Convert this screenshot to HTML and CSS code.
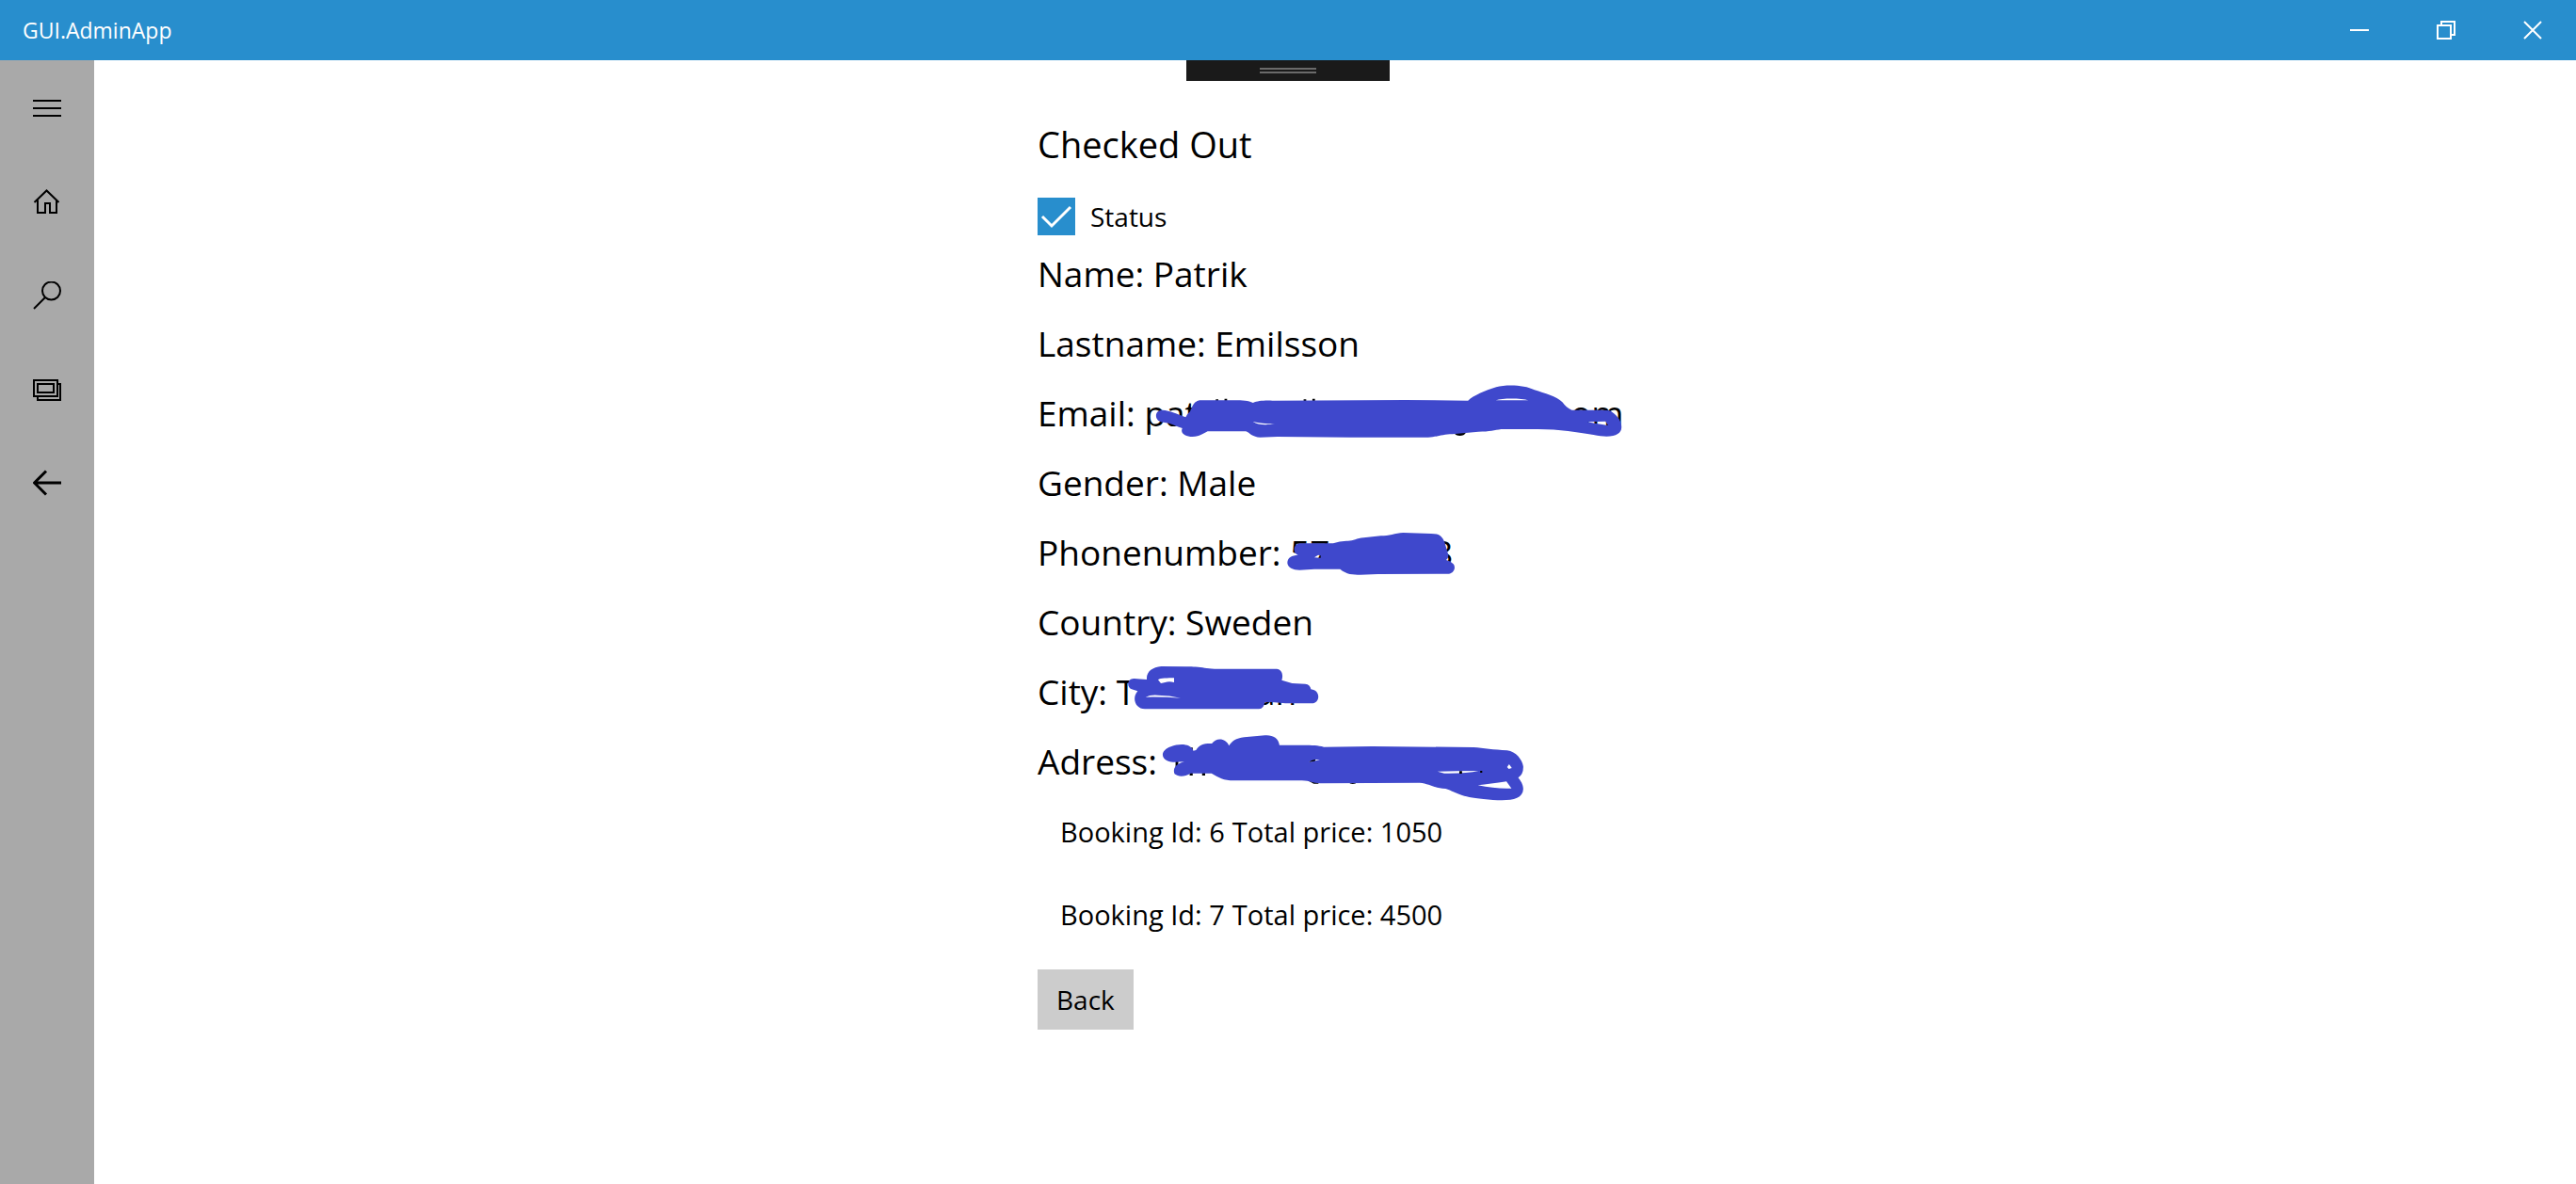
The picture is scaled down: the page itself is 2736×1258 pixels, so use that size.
FILE: index.html
```html
<!DOCTYPE html>
<html lang="en">
<head>
<meta charset="utf-8">
<title>GUI.AdminApp</title>
<link rel="stylesheet" href="styles.css">
</head>
<body>
<header class="titlebar">
  <span class="app-name">GUI.AdminApp</span>
  <div class="window-controls">
    <button class="window-button" type="button" aria-label="Minimize"><svg width="20" height="20"><path d="M0 10H20"/></svg></button>
    <button class="window-button" type="button" aria-label="Restore"><svg width="20" height="20"><path d="M1 5H15V19H1ZM5 5V1H19V15H15"/></svg></button>
    <button class="window-button" type="button" aria-label="Close"><svg width="20" height="20"><path d="M1 1L19 19M19 1L1 19"/></svg></button>
  </div>
  <div class="debug-tab"></div>
</header>
<div class="shell">
  <nav class="sidebar">
    <button class="nav-button" type="button" aria-label="Menu"><svg width="30" height="30"><path d="M0 8H30M0 16H30M0 24H30"/></svg></button>
    <button class="nav-button" type="button" aria-label="Home"><svg width="30" height="30"><path d="M1.500 16L14.500 3.500L27.500 16M5 13.500V27H13V17H18V27H25V13.500"/></svg></button>
    <button class="nav-button" type="button" aria-label="Search"><svg width="30" height="30"><circle cx="19.500" cy="10" r="9.500"/><path d="M1 29L13 17"/></svg></button>
    <button class="nav-button" type="button" aria-label="Bookings"><svg width="30" height="30"><path d="M1 5H26V22H1ZM5 9H22V18H5ZM26 9H29V26H5V22"/></svg></button>
    <button class="nav-button" type="button" aria-label="Go back"><svg class="bold" width="30" height="30"><path d="M30 14H2M14 1.500L1.500 14L14 26.500"/></svg></button>
  </nav>
  <main class="content">
    <div class="details">
      <h1 class="heading">Checked Out</h1>
      <label class="status"><input class="status-box" type="checkbox" checked><span>Status</span></label>
      <p class="field">Name: Patrik</p>
      <p class="field">Lastname: Emilsson</p>
      <p class="field">Email: pat<span class="end-email">om</span>
        <svg class="scribble scribble-email" viewBox="0 0 1568 240" preserveAspectRatio="none"><path class="speck" d="M265 73h8v9h-8zM292 71h8v9h-8zM536 73h8v9h-8zM563 71h8v9h-8zM1000 180h36q-5 9-18 9t-18-9z"/><path fill-rule="evenodd" d="M100 107C74 107 74 145 104 146C125 148 146 160 162 165C154 180 172 192 193 192C215 192 227 182 240 175H358C372 181 378 194 402 194L455 192L680 194L920 194C950 193 965 184 995 184L1075 176C1110 176 1125 171 1145 168H1250C1320 167 1380 178 1430 186C1490 199 1520 185 1516 157C1514 136 1499 121 1483 110Q1475 107 1455 107H1363C1350 101 1343 94 1334 82C1315 62 1280 54 1248 43C1217 26 1160 25 1130 34C1095 45 1060 61 1043 77L850 75L440 77C410 76 395 78 380 84C365 77 350 76 320 76H220C199 76 194 90 187 110C178 118 175 124 172 130C145 119 125 109 100 107ZM1128 76C1150 68 1208 69 1230 76ZM380 144Q405 151 447 151C425 155 395 156 380 144ZM1410 145L1467 143L1475 156Q1445 152 1410 145Z"/></svg></p>
      <p class="field">Gender: Male</p>
      <p class="field">Phonenumber: 57<span class="end-phone">8</span>
        <svg class="scribble scribble-phone" viewBox="0 0 720 240" preserveAspectRatio="none"><path fill-rule="evenodd" d="M228 82H122C100 84 98 114 116 119C96 121 82 126 82 145C84 160 99 167 121 167L168 164H250C271 181 290 182 315 182L370 180L596 179C614 177 620 157 610 147Q602 138 588 135Q597 130 594 116L583 78C574 57 565 51 540 51L451 48C425 50 406 58 380 58L325 64C301 66 290 76 270 74Q248 74 228 82ZM168 127L180 119L188 121V128Z"/></svg></p>
      <p class="field">Country: Sweden</p>
      <p class="field">City: T<span class="end-city">an</span>
        <svg class="scribble scribble-city" viewBox="0 0 1020 390" preserveAspectRatio="none"><path fill-rule="evenodd" d="M384 246Q361 245 344 243C321 242 319 271 336 277L355 283C335 306 348 340 378 340H742Q757 339 760 318H782L826 322H910C936 322 940 281 907 277Q905 262 889 260L847 258L814 248C820 231 814 213 798 212H600C565 211 553 204 510 205L430 204C402 207 382 220 384 246ZM420 247C427 240 452 242 471 241V255C450 250 444 256 429 258ZM380 302Q395 294 420 296Q456 296 492 305Q440 301 380 302Z"/></svg></p>
      <p class="field">Adress:
        <svg class="scribble scribble-address" viewBox="0 0 1568 270" preserveAspectRatio="none"><path class="speck" d="M444 115h8v20h-8zM486 150h9v12h-9zM523 150h9v12h-9zM487 73h8v12h-8zM841 180h28v8h-14zM958 182h26q-4 7-13 7t-13-7zM841 120l5-9h14v5z"/><path fill-rule="evenodd" d="M497 83C489 60 456 59 430 70C401 81 399 104 419 115C433 122 451 119 470 118C444 124 435 142 441 157C455 168 472 165 489 155H551C571 168 588 178 617 178H820C846 178 848 187 875 187L1170 185C1200 188 1212 202 1247 204C1283 217 1290 230 1360 237C1420 244 1477 246 1478 205C1478 190 1470 179 1463 169Q1479 158 1478 133C1475 112 1457 86 1430 82C1390 80 1360 74 1330 72L1030 69L885 71C858 63 840 66 753 65C750 42 732 32 710 34L648 40C623 43 612 53 603 67C593 40 563 41 552 60C529 59 514 64 505 81ZM841 120C850 110 861 111 873 111Q860 116 841 120ZM1223 149Q1280 148 1345 147Q1310 156 1243 155ZM1430 135L1436 126L1444 138L1435 141ZM1343 193Q1380 189 1428 181L1443 203Q1395 205 1343 193Z"/><path class="speck" d="M1288 148h8v8h-8zM1350 147h6v6h-6z"/></svg></p>
      <ul class="bookings">
        <li class="booking"><span>Booking Id: 6</span><span>Total price: 1050</span></li>
        <li class="booking"><span>Booking Id: 7</span><span>Total price: 4500</span></li>
      </ul>
      <button class="back" type="button">Back</button>
    </div>
  </main>
</div>
</body>
</html>
```
FILE: styles.css
```css
* { box-sizing: border-box; }

body {
  margin: 0;
  min-height: 100vh;
  display: flex;
  flex-direction: column;
  background: #fff;
  color: #000;
  font-family: "Open Sans", "Noto Sans", sans-serif;
  font-size: 28px;
}

button {
  border: 0;
  padding: 0;
  background: none;
  color: inherit;
  font: inherit;
}

svg {
  display: block;
  fill: none;
  stroke: currentColor;
  stroke-width: 2px;
}

.bold { stroke-width: 3px; }

.titlebar {
  position: relative;
  display: flex;
  justify-content: space-between;
  height: 64px;
  padding-left: 24px;
  background: #288ecd;
  color: #fff;
}

.app-name {
  font-size: 23px;
  line-height: 64px;
}

.window-controls { display: flex; }

.window-button {
  display: grid;
  place-items: center;
  width: 92px;
}

.debug-tab {
  position: absolute;
  top: 100%;
  left: 50%;
  width: 216px;
  height: 22px;
  margin-left: -108px;
  background: #1a1a1a;
}

.debug-tab::after {
  content: "";
  display: block;
  width: 60px;
  height: 2px;
  margin: 8px auto;
  border: solid #6a6a6a;
  border-width: 2px 0;
}

.shell {
  flex: 1;
  display: flex;
}

.sidebar {
  flex: none;
  width: 100px;
  background: #a9a9a9;
}

.nav-button {
  display: grid;
  place-items: center;
  width: 100%;
  height: 100px;
}

.content {
  flex: 1;
  display: flex;
  justify-content: center;
  padding-top: 52px;
}

.details {
  width: 632px;
}

.heading,
.field {
  position: relative;
  margin: 0;
  font-size: 37px;
  font-weight: 400;
  line-height: 74px;
  white-space: nowrap;
}

.heading { font-size: 38px; }

.status {
  display: flex;
  align-items: center;
  gap: 16px;
  height: 48px;
  margin-top: 16px;
}

.status-box {
  appearance: none;
  width: 40px;
  height: 40px;
  margin: 0;
}

.status-box:checked {
  background: #288ecd url("data:image/svg+xml,%3Csvg xmlns='http://www.w3.org/2000/svg' viewBox='0 0 40 40'%3E%3Cpath d='M5 20L15 30L35 10' fill='none' stroke='white' stroke-width='3'/%3E%3C/svg%3E");
}

.end-email,
.end-phone,
.end-city {
  position: absolute;
  top: 0;
}

.end-email { left: 566px; }
.end-phone { left: 420px; }
.end-city { left: 232px; }

.scribble {
  position: absolute;
  fill: #3f48cc;
  stroke: none;
}

.speck { fill: #000; }

.scribble-email {
  top: -2px;
  left: 98px;
  width: 540px;
  height: 80px;
}

.scribble-phone {
  top: 0;
  left: 238px;
  width: 240px;
  height: 80px;
}

.scribble-city {
  top: -58px;
  left: -12px;
  width: 340px;
  height: 130px;
}

.scribble-address {
  top: -2px;
  left: -12px;
  width: 560px;
  height: 90px;
}

.bookings {
  display: grid;
  gap: 12px;
  margin: 0;
  padding: 0 24px;
  list-style: none;
}

.booking {
  display: flex;
  gap: 8px;
  font-size: 29px;
  line-height: 76px;
}

.back {
  height: 64px;
  margin-top: 20px;
  padding: 0 20px;
  background: #ccc;
}
```
